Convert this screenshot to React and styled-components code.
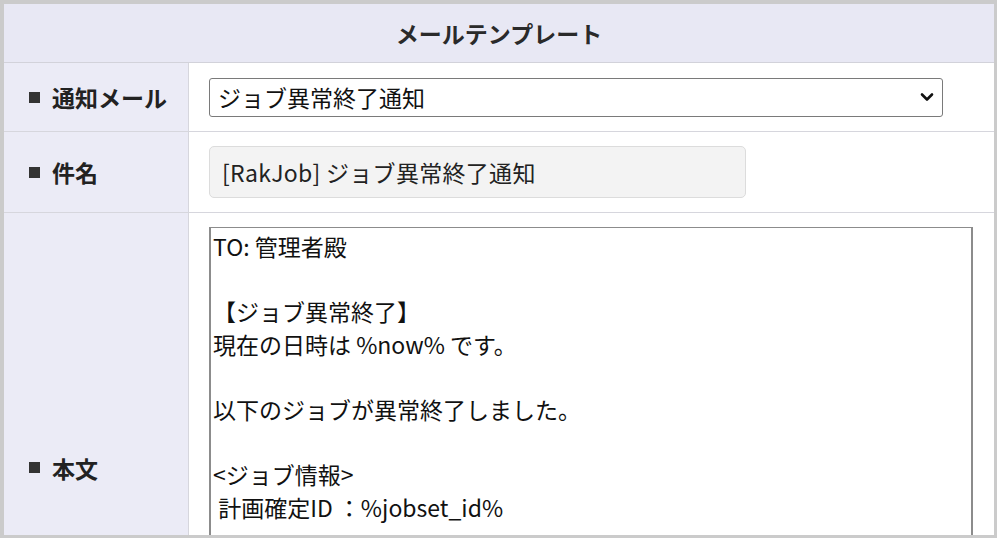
import React from "react";
import styled, { createGlobalStyle } from "styled-components";

const Global = createGlobalStyle`
  html, body { margin: 0; padding: 0; background: #cbcbcb; overflow: hidden; }
  body { font-family: "Noto Sans CJK JP", "Noto Sans", sans-serif; color: #222; }
  #root { width: 997px; height: 538px; }
`;

const Frame = styled.div`
  box-sizing: border-box;
  width: 997px;
  height: 538px;
  padding: 4px 3px 3px 4px;
  background: #cbcbcb;
`;

const Panel = styled.div`
  height: 100%;
  background: #fff;
  overflow: hidden;
  display: flex;
  flex-direction: column;
`;

const Header = styled.div`
  height: 58px;
  flex: none;
  display: flex;
  align-items: center;
  justify-content: center;
  background: #e8e8f4;
  border-bottom: 1px solid #d2d2da;
  font-size: 23px;
  font-weight: 700;
  color: #2a2a2a;
`;

const Row = styled.div`
  display: grid;
  grid-template-columns: 185px 1fr;
  flex: none;
  min-height: ${(p) => p.$h}px;
  border-bottom: 1px solid #d6d6dd;
`;

const Label = styled.div`
  background: #ebebf6;
  border-right: 1px solid #d6d6dd;
  display: flex;
  align-items: center;
  padding-left: 25px;
  font-size: 23px;
  font-weight: 700;
  color: #222;
  gap: 12px;
`;

const Square = styled.span`
  width: 11px;
  height: 11px;
  background: #333;
  display: inline-block;
`;

const Cell = styled.div`
  display: flex;
  align-items: ${(p) => (p.$top ? "flex-start" : "center")};
  padding: ${(p) => (p.$top ? "14px 0 15px 20px" : "0 0 0 20px")};
`;

const SelectWrap = styled.div`
  position: relative;
  width: 734px;
`;

const Select = styled.select`
  appearance: none;
  box-sizing: border-box;
  width: 100%;
  height: 39px;
  border: 1px solid #7a7a7a;
  border-radius: 3px;
  background: #fff;
  font-family: inherit;
  font-size: 23px;
  color: #111;
  padding: 0 40px 0 8px;
  line-height: 37px;
`;

const Chevron = styled.svg`
  position: absolute;
  right: 9px;
  top: 14px;
  pointer-events: none;
`;

const Input = styled.input`
  box-sizing: border-box;
  width: 537px;
  height: 52px;
  border: 1px solid #dcdcdc;
  border-radius: 5px;
  background: #f3f3f3;
  font-family: inherit;
  font-size: 23px;
  letter-spacing: 0.3px;
  color: #222;
  padding: 0 12px;
`;

const TextArea = styled.textarea`
  box-sizing: border-box;
  width: 764px;
  height: 480px;
  border: 2px solid #8c8c8c;
  border-top-width: 1px;
  border-radius: 0;
  background: #fff;
  font-family: inherit;
  font-size: 23px;
  line-height: 32.6px;
  color: #111;
  padding: 2px 2px;
  resize: none;
  overflow: hidden;
  white-space: pre;
`;

const body = `TO: 管理者殿

【ジョブ異常終了】
現在の日時は %now% です。

以下のジョブが異常終了しました。

<ジョブ情報>
 計画確定ID ：%jobset_id%`;

export default function App() {
  return (
    <>
      <Global />
      <Frame>
        <Panel>
          <Header>メールテンプレート</Header>
          <Row $h={68}>
            <Label>
              <Square />
              通知メール
            </Label>
            <Cell>
              <SelectWrap>
                <Select defaultValue="abend">
                  <option value="abend">ジョブ異常終了通知</option>
                  <option value="end">ジョブ正常終了通知</option>
                </Select>
                <Chevron width="14" height="10" viewBox="0 0 14 10">
                  <path d="M2 2.5 L7 7.5 L12 2.5" fill="none" stroke="#111" strokeWidth="2.6" strokeLinecap="round" strokeLinejoin="round" />
                </Chevron>
              </SelectWrap>
            </Cell>
          </Row>
          <Row $h={80}>
            <Label>
              <Square />
              件名
            </Label>
            <Cell>
              <Input readOnly value="[RakJob] ジョブ異常終了通知" />
            </Cell>
          </Row>
          <Row $h={508}>
            <Label>
              <Square />
              本文
            </Label>
            <Cell $top>
              <TextArea readOnly value={body} />
            </Cell>
          </Row>
        </Panel>
      </Frame>
    </>
  );
}
